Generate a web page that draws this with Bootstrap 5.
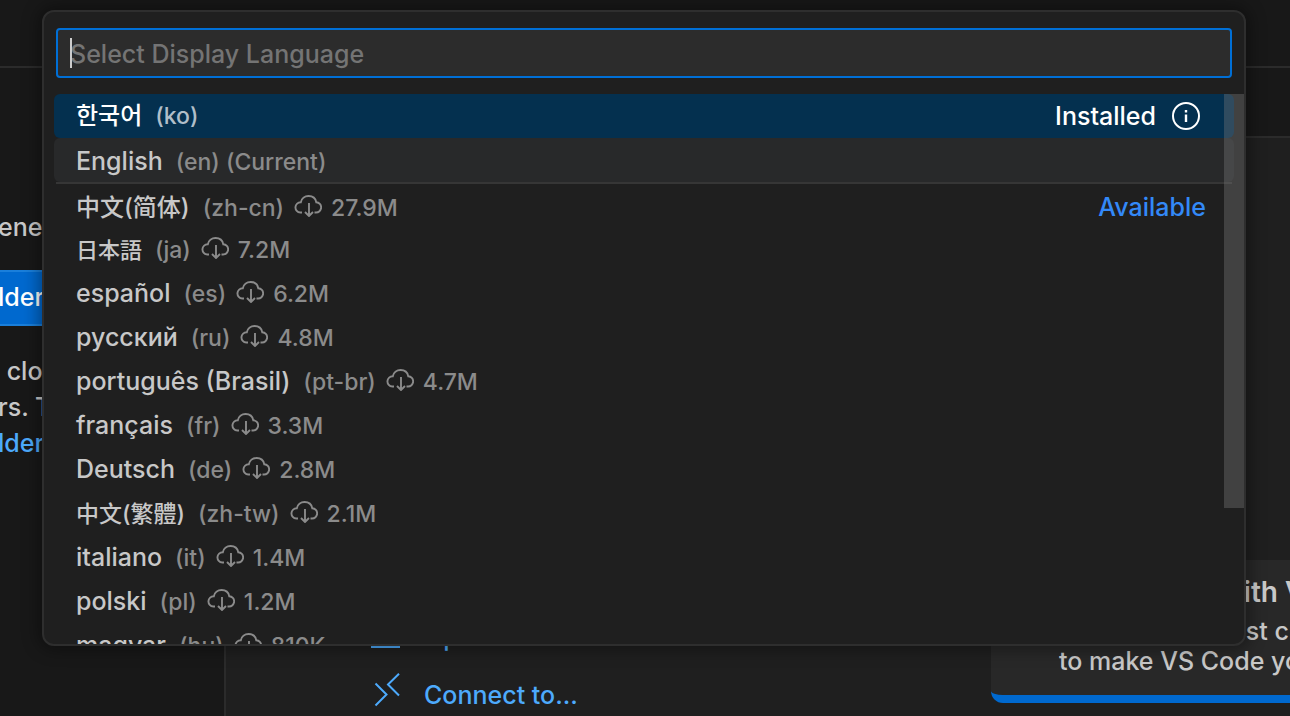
<!DOCTYPE html>
<html lang="en">
<head>
<meta charset="utf-8">
<meta name="viewport" content="width=device-width, initial-scale=1">
<title>Select Display Language</title>
<link href="https://cdn.jsdelivr.net/npm/bootstrap@5.3.0/dist/css/bootstrap.min.css" rel="stylesheet">
<style>
  body { background: #181818; color: #c8c8c8; font-family: Inter, "Noto Sans CJK SC", sans-serif; font-size: 25px; font-weight: 500; line-height: 36px; }
  a { color: #4daafc; text-decoration: none; }
  .line { border: 0 solid #2b2b2b; }
  .titlebar { height: 68px; border-bottom-width: 2px; }
  .sidebar { width: 226px; border-right-width: 2px; padding-top: 141px; }
  .sidebar-text { margin-left: -2px; }
  .open-folder { width: 190px; height: 56px; margin: 25px 0 27px; padding: 0; border: 2px solid #1a7fdb; border-left: 0; border-radius: 0; background: #0069cf; color: #fff; font-size: 25px; font-weight: 500; text-align: left; }
  .open-folder:hover { background: #0069cf; color: #fff; }
  .tabs { height: 70px; border-bottom-width: 2px; }
  .editor { background: #1f1f1f; padding-left: 145px; }
  .start { gap: 14px; padding-top: 477px; }
  .start svg { width: 32px; height: 44px; margin-right: 21px; }
  .walkthrough { width: 299px; height: 143px; margin-top: 422px; padding: 14px 0 0 68px; background: #282828; border-bottom: 8px solid #0069cf; border-bottom-left-radius: 12px; line-height: 30px; }
  .walkthrough h2 { font-size: 28px; font-weight: 600; line-height: 36px; margin-bottom: 6px; }
  .palette-layer { padding: 10px 44px 0 42px; }
  .palette { background: #1f1f1f; border: 2px solid #2e2e2e; border-radius: 12px; box-shadow: 0 0 16px 4px rgba(0,0,0,.36); }
  .query { margin: 16px 12px; }
  .query .form-control { height: 50px; padding: 2px 12px 0; border: 2px solid #006fd6; border-radius: 4px; background: #2c2c2c; color: #ccc; font-size: 25px; font-weight: 500; line-height: 36px; box-shadow: none; }
  .query .form-control::placeholder { color: #747474; }
  .caret { left: 14px; top: 10px; width: 2px; height: 30px; background: #ccc; }
  .languages { max-height: 550px; padding: 0 10px; }
  .language { height: 44px; padding: 0 28px 0 22px; border-radius: 6px; white-space: nowrap; flex-shrink: 0; }
  .language.active { background: #04304f; color: #fff; padding-right: 34px; }
  .language.current { background: #28292a; }
  .language.divided { border-top: 2px solid #363636; border-radius: 0; margin: 0 2px; padding: 0 26px 0 20px; height: 44px; }
  .name { font-size: 25px; line-height: 46px; }
  .detail { margin-left: 13px; font-size: 23px; color: #8b8b8b; }
  .active .detail { color: #b0bec9; }
  .detail svg { width: 28px; height: 22px; margin: 0 9px 0 10px; vertical-align: -1px; display: inline-block; }
  .cjk { font-size: 22px; line-height: 48px; }
  .cjk-md { font-size: 23px; line-height: 48px; }
  .cjk-lg { font-size: 24px; line-height: 48px; }
  .available { color: #3389f8; }
  .info { width: 28px; height: 28px; margin-left: 16px; color: #fff; }
  .thumb { top: 0; right: 0; width: 20px; height: 414px; background: rgba(121,121,121,.38); }
</style>
</head>
<body class="vh-100 overflow-hidden">
<svg class="d-none" xmlns="http://www.w3.org/2000/svg">
  <symbol id="cloud" viewBox="0 0 28 22"><path d="M8 17.500H6.300A5.100 5.100 0 0 1 6.800 7.300C7.500 3.500 10.700 1 14.600 1s7 2.500 7.700 6.300a5.100 5.100 0 0 1-.5 10.200H20.500M15 8v13M11 17l4 4 4-4" fill="none" stroke="currentColor" stroke-width="1.900"/></symbol>
</svg>

<div class="h-100 d-flex flex-column overflow-hidden">
  <header class="titlebar line flex-shrink-0"></header>
  <div class="d-flex flex-grow-1 overflow-hidden">
    <aside class="sidebar line flex-shrink-0 text-nowrap">
      <div class="sidebar-text">ened</div>
      <button type="button" class="btn open-folder d-block"><span class="sidebar-text">lder</span></button>
      <div>&nbsp;clo</div>
      <div class="sidebar-text">rs. T</div>
      <a href="#" class="sidebar-text">lder</a>
    </aside>
    <main class="flex-grow-1 d-flex flex-column overflow-hidden">
      <div class="tabs line flex-shrink-0"></div>
      <div class="editor flex-grow-1 d-flex justify-content-between overflow-hidden">
        <nav class="start d-flex flex-column">
          <a href="#" class="d-flex align-items-center">
            <svg viewBox="0 0 32 44" fill="none" stroke="currentColor" stroke-width="2"><path d="M1 10h10l4 4h13v18H1z"/></svg>Open...</a>
          <a href="#" class="d-flex align-items-center">
            <svg viewBox="0 0 32 44" fill="none" stroke="currentColor" stroke-width="2"><path d="M4.500 10.500l11 11-11 11M28 .8L17 11.500l11 11"/></svg>Connect to...</a>
        </nav>
        <section class="walkthrough flex-shrink-0 text-nowrap overflow-hidden">
          <h2>Get Started with V</h2>
          <div>Discover the best c</div>
          <div>to make VS Code yo</div>
        </section>
      </div>
    </main>
  </div>
</div>

<div class="palette-layer position-absolute top-0 start-0 w-100">
  <div class="palette overflow-hidden" role="dialog" aria-label="Select Display Language">
    <div class="query position-relative">
      <input type="text" class="form-control" id="query" placeholder="Select Display Language" aria-label="Select Display Language">
      <span class="caret position-absolute"></span>
    </div>
    <div class="position-relative">
      <ul class="languages list-unstyled d-flex flex-column overflow-hidden mb-0">
        <li class="language active d-flex align-items-center"><div class="flex-grow-1"><span class="name cjk-lg">한국어</span><span class="detail">(ko)</span></div><span class="name">Installed</span>
          <button type="button" class="btn p-0 border-0 info d-flex" aria-label="More info"><svg width="28" height="28" viewBox="0 0 28 28" fill="none" stroke="currentColor" stroke-width="2"><circle cx="14" cy="14" r="13"/><path d="M14 12.500v7.500M14 8v2.500" stroke-width="2.400"/></svg></button></li>
        <li class="language current"><span class="name">English</span><span class="detail">(en) (Current)</span></li>
        <li class="language divided d-flex"><div class="flex-grow-1"><span class="name cjk-lg">中文(简体)</span><span class="detail">(zh-cn)<svg><use href="#cloud"/></svg>27.9M</span></div><span class="name available">Available</span></li>
        <li class="language"><span class="name cjk" lang="ja">日本語</span><span class="detail">(ja)<svg><use href="#cloud"/></svg>7.2M</span></li>
        <li class="language"><span class="name">español</span><span class="detail">(es)<svg><use href="#cloud"/></svg>6.2M</span></li>
        <li class="language"><span class="name">русский</span><span class="detail">(ru)<svg><use href="#cloud"/></svg>4.8M</span></li>
        <li class="language"><span class="name">português (Brasil)</span><span class="detail">(pt-br)<svg><use href="#cloud"/></svg>4.7M</span></li>
        <li class="language"><span class="name">français</span><span class="detail">(fr)<svg><use href="#cloud"/></svg>3.3M</span></li>
        <li class="language"><span class="name">Deutsch</span><span class="detail">(de)<svg><use href="#cloud"/></svg>2.8M</span></li>
        <li class="language"><span class="name cjk-md" lang="zh-TW">中文(繁體)</span><span class="detail">(zh-tw)<svg><use href="#cloud"/></svg>2.1M</span></li>
        <li class="language"><span class="name">italiano</span><span class="detail">(it)<svg><use href="#cloud"/></svg>1.4M</span></li>
        <li class="language"><span class="name">polski</span><span class="detail">(pl)<svg><use href="#cloud"/></svg>1.2M</span></li>
        <li class="language"><span class="name">magyar</span><span class="detail">(hu)<svg><use href="#cloud"/></svg>810K</span></li>
      </ul>
      <div class="thumb position-absolute"></div>
    </div>
  </div>
</div>
<script src="https://cdn.jsdelivr.net/npm/bootstrap@5.3.0/dist/js/bootstrap.bundle.min.js"></script>
</body>
</html>
